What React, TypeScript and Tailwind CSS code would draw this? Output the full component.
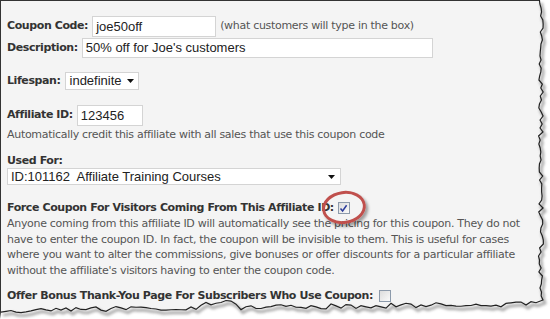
import React from "react";

const label = "font-bold tracking-[-0.4px] text-[#333]";

// jagged edge points for the torn paper look
const rnd = (i: number) => {
    const x = Math.sin(i * 12.9898 + 78.233) * 43758.5453;
    return x - Math.floor(x);
};

const tornPath = () => {
    const pts: string[] = [];
    for (let y = 0; y <= 296; y += 4) {
        pts.push(`${541 + (rnd(y) - 0.5) * 5},${y}`);
    }
    pts.push("543,300");
    for (let x = 536; x >= 0; x -= 5) {
        const base = 304 + (536 - x) * 0.012;
        pts.push(`${x},${base + (rnd(x + 500) - 0.5) * 5 + (x > 200 && x < 240 ? -5 : 0)}`);
    }
    return pts;
};

const TornEdge = () => {
    const pts = tornPath();
    const line = "M" + pts.join(" L");
    const mask = line + " L0,319 L550,319 L550,0 Z";
    return (
        <svg className="absolute inset-0" width="550" height="319" viewBox="0 0 550 319">
            <defs>
                <filter id="sh" x="-10%" y="-10%" width="120%" height="120%">
                    <feGaussianBlur stdDeviation="1.6"/>
                </filter>
            </defs>
            <path d={mask} fill="#ffffff"/>
            <path d={line} transform="translate(2,3)" fill="none" stroke="#9a9a9a" strokeWidth="2.5" filter="url(#sh)"/>
            <path d={line} fill="none" stroke="#222" strokeWidth="1.2"/>
        </svg>
    );
};

const Checkbox = ({ checked }: { checked?: boolean }) => (
    <span className="inline-flex h-[12px] w-[12px] items-center justify-center border border-[#8c9aab] bg-gradient-to-br from-[#dcdcdc] to-[#fafafa]">
        {checked && (
            <svg width="9" height="9" viewBox="0 0 9 9">
                <path d="M1.5 4.5 L3.6 7 L7.6 1.2" fill="none" stroke="#2b3c9b" strokeWidth="1.5"/>
            </svg>
        )}
    </span>
);

const Arrow = () => (
    <svg width="7" height="4" viewBox="0 0 7 4" className="ml-auto">
        <path d="M0 0 L7 0 L3.5 4 Z" fill="#111"/>
    </svg>
);

const arial = { fontFamily: "'Liberation Sans', Arial, sans-serif" };

export default function App() {
    return (
        <div className="relative h-[319px] w-[550px] overflow-hidden bg-white" style={{ fontFamily: "'DejaVu Sans', Verdana, sans-serif" }}>
            <div className="h-[319px] w-[550px] border-l border-t border-[#333] bg-[#f4f4f4] pl-[6px] pt-[15px] text-[11px] tracking-[-0.3px] text-[#444]">
                <div className="flex h-[21px] items-center">
                    <span className={label}>Coupon Code:</span>
                    <div className="ml-[4px] flex h-[21px] w-[124px] items-center border border-[#d4d4d4] bg-white px-[3px] text-[13px] tracking-normal text-[#222]" style={arial}>
                        joe50off
                    </div>
                    <span className="ml-[4px] text-[#555]">(what customers will type in the box)</span>
                </div>
                <div className="mt-[1px] flex h-[20px] items-center">
                    <span className={label}>Description:</span>
                    <div className="ml-[4px] flex h-[20px] w-[351px] items-center border border-[#d4d4d4] bg-white px-[3px] text-[13px] tracking-normal text-[#222]" style={arial}>
                        50% off for Joe's customers
                    </div>
                </div>
                <div className="mt-[14px] flex h-[18px] items-center">
                    <span className={label}>Lifespan:</span>
                    <div className="ml-[4px] flex h-[18px] w-[74px] items-center border border-[#d4d4d4] bg-white pl-[4px] pr-[4px] text-[13px] tracking-normal text-[#222]" style={arial}>
                        indefinite
                        <Arrow/>
                    </div>
                </div>
                <div className="mt-[15px] flex h-[21px] items-center">
                    <span className={label}>Affiliate ID:</span>
                    <div className="ml-[4px] flex h-[21px] w-[66px] items-center border border-[#d4d4d4] bg-white px-[3px] text-[13px] tracking-normal text-[#222]" style={arial}>
                        123456
                    </div>
                </div>
                <div className="mt-[1px] leading-[16px] text-[#555]">Automatically credit this affiliate with all sales that use this coupon code</div>
                <div className={`${label} mt-[10px] leading-[15px]`}>Used For:</div>
                <div className="flex h-[17px] w-[334px] items-center border border-[#d4d4d4] bg-white pl-[3px] pr-[5px] text-[13px] tracking-normal text-[#222]" style={arial}>
                    ID:101162&nbsp; Affiliate Training Courses
                    <Arrow/>
                </div>
                <div className="relative mt-[15px] flex h-[16px] items-center">
                    <span className={label}>Force Coupon For Visitors Coming From This Affiliate ID:</span>
                    <span className="relative ml-[4px] inline-flex">
                        <Checkbox checked/>
                        <span className="absolute left-[-16px] top-[-11px] h-[33px] w-[44px] rotate-[-8deg] rounded-[50%] border-[3px] border-[#c0504d] shadow-[2px_3px_3px_rgba(0,0,0,0.35)]"/>
                    </span>
                </div>
                <p className="w-[532px] leading-[15.7px] text-[#555]">
                    Anyone coming from this affiliate ID will automatically see the pricing for this coupon. They do not have to enter the coupon ID. In fact, the coupon will be invisible to them. This is useful for cases where you want to alter the commissions, give bonuses or offer discounts for a particular affiliate without the affiliate's visitors having to enter the coupon code.
                </p>
                <div className="mt-[9px] flex h-[16px] items-center">
                    <span className={label}>Offer Bonus Thank-You Page For Subscribers Who Use Coupon:</span>
                    <span className="ml-[6px] inline-flex"><Checkbox/></span>
                </div>
            </div>
            <TornEdge/>
        </div>
    );
}
